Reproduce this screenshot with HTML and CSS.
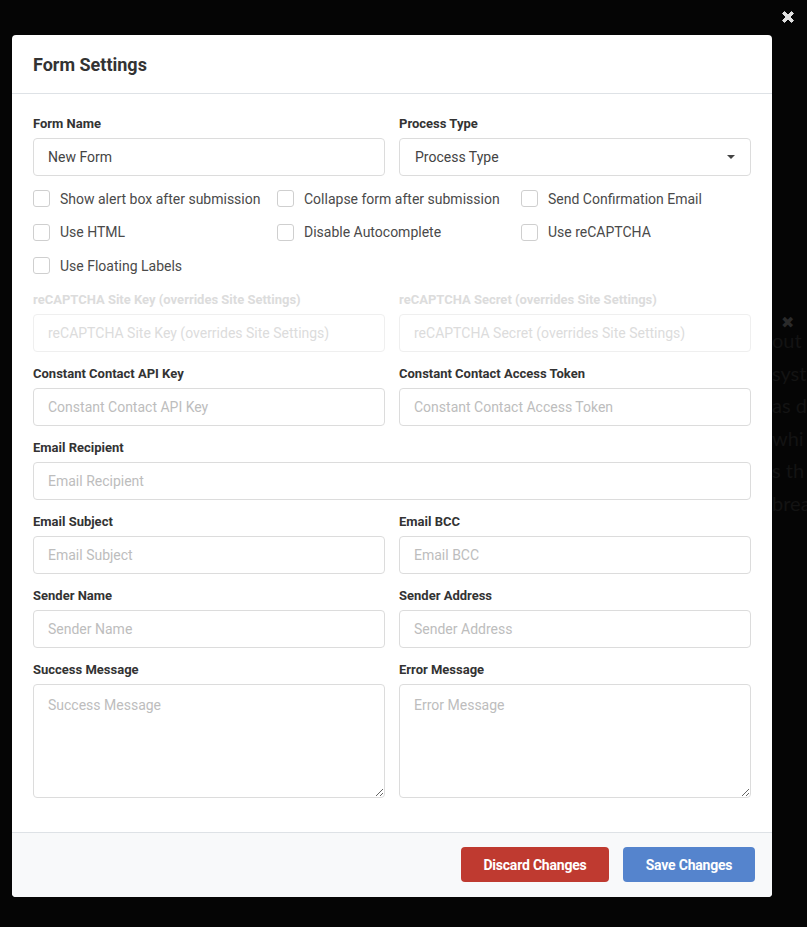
FILE: index.html
```html
<!DOCTYPE html>
<html lang="en">
<head>
<meta charset="utf-8">
<title>Form Settings</title>
<link rel="stylesheet" href="styles.css">
</head>
<body>
<div class="backdrop-page">
  <span class="bg-x">&#10006;</span>
  <div class="bg-text">
    <p>out</p><p>syst</p><p>as de</p><p>whi</p><p>s th</p><p>brea</p>
  </div>
</div>
<button class="close-x" aria-label="Close"><svg width="16" height="16" viewBox="0 0 16 16"><path d="M2.5 4.5 L4.5 2.5 L8 6 L11.5 2.5 L13.5 4.5 L10 8 L13.5 11.5 L11.5 13.5 L8 10 L4.5 13.5 L2.5 11.5 L6 8 Z" fill="#e0e0e0" stroke="#e0e0e0" stroke-width="1" stroke-linejoin="round"/></svg></button>
<div class="modal">
  <div class="modal-header"><h1>Form Settings</h1></div>
  <div class="modal-body">
    <div class="row">
      <div class="group">
        <label class="lbl">Form Name</label>
        <input class="field" type="text" value="New Form">
      </div>
      <div class="group">
        <label class="lbl">Process Type</label>
        <div class="select">
          <span>Process Type</span>
          <svg width="10" height="6" viewBox="0 0 10 6"><path d="M1 1 L9 1 L5 5 Z" fill="#444"/></svg>
        </div>
      </div>
    </div>
    <div class="checks">
      <label class="chk"><span class="box"></span>Show alert box after submission</label>
      <label class="chk"><span class="box"></span>Collapse form after submission</label>
      <label class="chk"><span class="box"></span>Send Confirmation Email</label>
      <label class="chk"><span class="box"></span>Use HTML</label>
      <label class="chk"><span class="box"></span>Disable Autocomplete</label>
      <label class="chk"><span class="box"></span>Use reCAPTCHA</label>
      <label class="chk"><span class="box"></span>Use Floating Labels</label>
    </div>
    <div class="row">
      <div class="group disabled">
        <label class="lbl">reCAPTCHA Site Key (overrides Site Settings)</label>
        <input class="field" type="text" placeholder="reCAPTCHA Site Key (overrides Site Settings)" disabled>
      </div>
      <div class="group disabled">
        <label class="lbl">reCAPTCHA Secret (overrides Site Settings)</label>
        <input class="field" type="text" placeholder="reCAPTCHA Secret (overrides Site Settings)" disabled>
      </div>
    </div>
    <div class="row">
      <div class="group">
        <label class="lbl">Constant Contact API Key</label>
        <input class="field" type="text" placeholder="Constant Contact API Key">
      </div>
      <div class="group">
        <label class="lbl">Constant Contact Access Token</label>
        <input class="field" type="text" placeholder="Constant Contact Access Token">
      </div>
    </div>
    <div class="group">
      <label class="lbl">Email Recipient</label>
      <input class="field" type="text" placeholder="Email Recipient">
    </div>
    <div class="row">
      <div class="group">
        <label class="lbl">Email Subject</label>
        <input class="field" type="text" placeholder="Email Subject">
      </div>
      <div class="group">
        <label class="lbl">Email BCC</label>
        <input class="field" type="text" placeholder="Email BCC">
      </div>
    </div>
    <div class="row">
      <div class="group">
        <label class="lbl">Sender Name</label>
        <input class="field" type="text" placeholder="Sender Name">
      </div>
      <div class="group">
        <label class="lbl">Sender Address</label>
        <input class="field" type="text" placeholder="Sender Address">
      </div>
    </div>
    <div class="row">
      <div class="group">
        <label class="lbl">Success Message</label>
        <textarea class="field area" placeholder="Success Message"></textarea>
      </div>
      <div class="group">
        <label class="lbl">Error Message</label>
        <textarea class="field area" placeholder="Error Message"></textarea>
      </div>
    </div>
  </div>
  <div class="modal-footer">
    <button class="btn btn-discard">Discard Changes</button>
    <button class="btn btn-save">Save Changes</button>
  </div>
</div>
</body>
</html>
```
FILE: styles.css
```css
* { box-sizing: border-box; }
html, body { margin: 0; padding: 0; }
body {
  width: 807px;
  height: 927px;
  background: #050505;
  font-family: Roboto, "Liberation Sans", Arial, sans-serif;
  position: relative;
  overflow: hidden;
  padding: 35px 35px 30px 12px;
}
.backdrop-page {
  position: absolute;
  left: 772px;
  top: 314px;
  width: 35px;
  overflow: hidden;
  color: #131313;
  font-family: Lato, "Open Sans", sans-serif;
  font-size: 20px;
  white-space: nowrap;
}
.bg-x { display: block; color: #2a2a2a; font-size: 16px; line-height: 16px; margin-left: 9px; }
.bg-text p { margin: 0 0 12.5px; line-height: 20px; }
.close-x {
  position: absolute;
  top: 9px;
  left: 780px;
  width: 16px;
  height: 16px;
  padding: 0;
  border: 0;
  background: none;
}
.close-x svg { display: block; }
.modal {
  position: relative;
  width: 760px;
  background: #fff;
  border-radius: 4px;
  overflow: hidden;
}
.modal-header {
  height: 59px;
  border-bottom: 1px solid #dee2e6;
  padding: 0 21px;
  display: flex;
  align-items: center;
}
.modal-header h1 {
  margin: 0;
  font-size: 18px;
  font-weight: 700;
  color: #333;
}
.modal-body {
  padding: 20px 21px 22px;
}
.row {
  display: grid;
  grid-template-columns: 1fr 1fr;
  column-gap: 14px;
}
.group { margin-bottom: 12px; }
.lbl {
  display: block;
  font-size: 13px;
  font-weight: 700;
  color: #333;
  line-height: 19px;
  margin-bottom: 5px;
}
.field {
  display: block;
  width: 100%;
  height: 38px;
  border: 1px solid #dcdcdc;
  border-radius: 4px;
  padding: 0 14px;
  font-family: Roboto, "Liberation Sans", Arial, sans-serif;
  font-size: 14px;
  color: #444;
  background: #fff;
  outline: none;
}
.field::placeholder { color: #bdbdbd; }
.area {
  height: 114px;
  padding: 10px 14px;
  resize: vertical;
  line-height: 20px;
}
.disabled .lbl { color: #dcdcdc; }
.disabled .field { border-color: #efefef; background: #fff; }
.disabled .field::placeholder { color: #dcdcdc; }
.select {
  height: 38px;
  border: 1px solid #dcdcdc;
  border-radius: 4px;
  padding: 0 14px 0 15px;
  display: flex;
  align-items: center;
  justify-content: space-between;
  font-size: 14px;
  color: #444;
}
.checks {
  display: grid;
  grid-template-columns: 244px 244px 1fr;
  margin-top: -6px;
  margin-bottom: 7px;
}
.chk {
  display: flex;
  align-items: center;
  gap: 10px;
  height: 33.5px;
  font-size: 14px;
  color: #4a4a4a;
}
.box {
  width: 17px;
  height: 17px;
  border: 1px solid #cfcfcf;
  border-radius: 3px;
  background: #fff;
  flex: none;
}
.modal-footer {
  background: #f8f9fa;
  border-top: 1px solid #dee2e6;
  height: 65px;
  display: flex;
  justify-content: flex-end;
  align-items: center;
  gap: 14px;
  padding-right: 17px;
}
.btn {
  height: 35px;
  border: 0;
  border-radius: 4px;
  color: #fff;
  font-family: Roboto, "Liberation Sans", Arial, sans-serif;
  font-size: 14px;
  font-weight: 700;
  letter-spacing: -0.2px;
}
.btn-discard { width: 148px; background: #bf3a30; }
.btn-save { width: 132px; background: #5584cd; }
```
